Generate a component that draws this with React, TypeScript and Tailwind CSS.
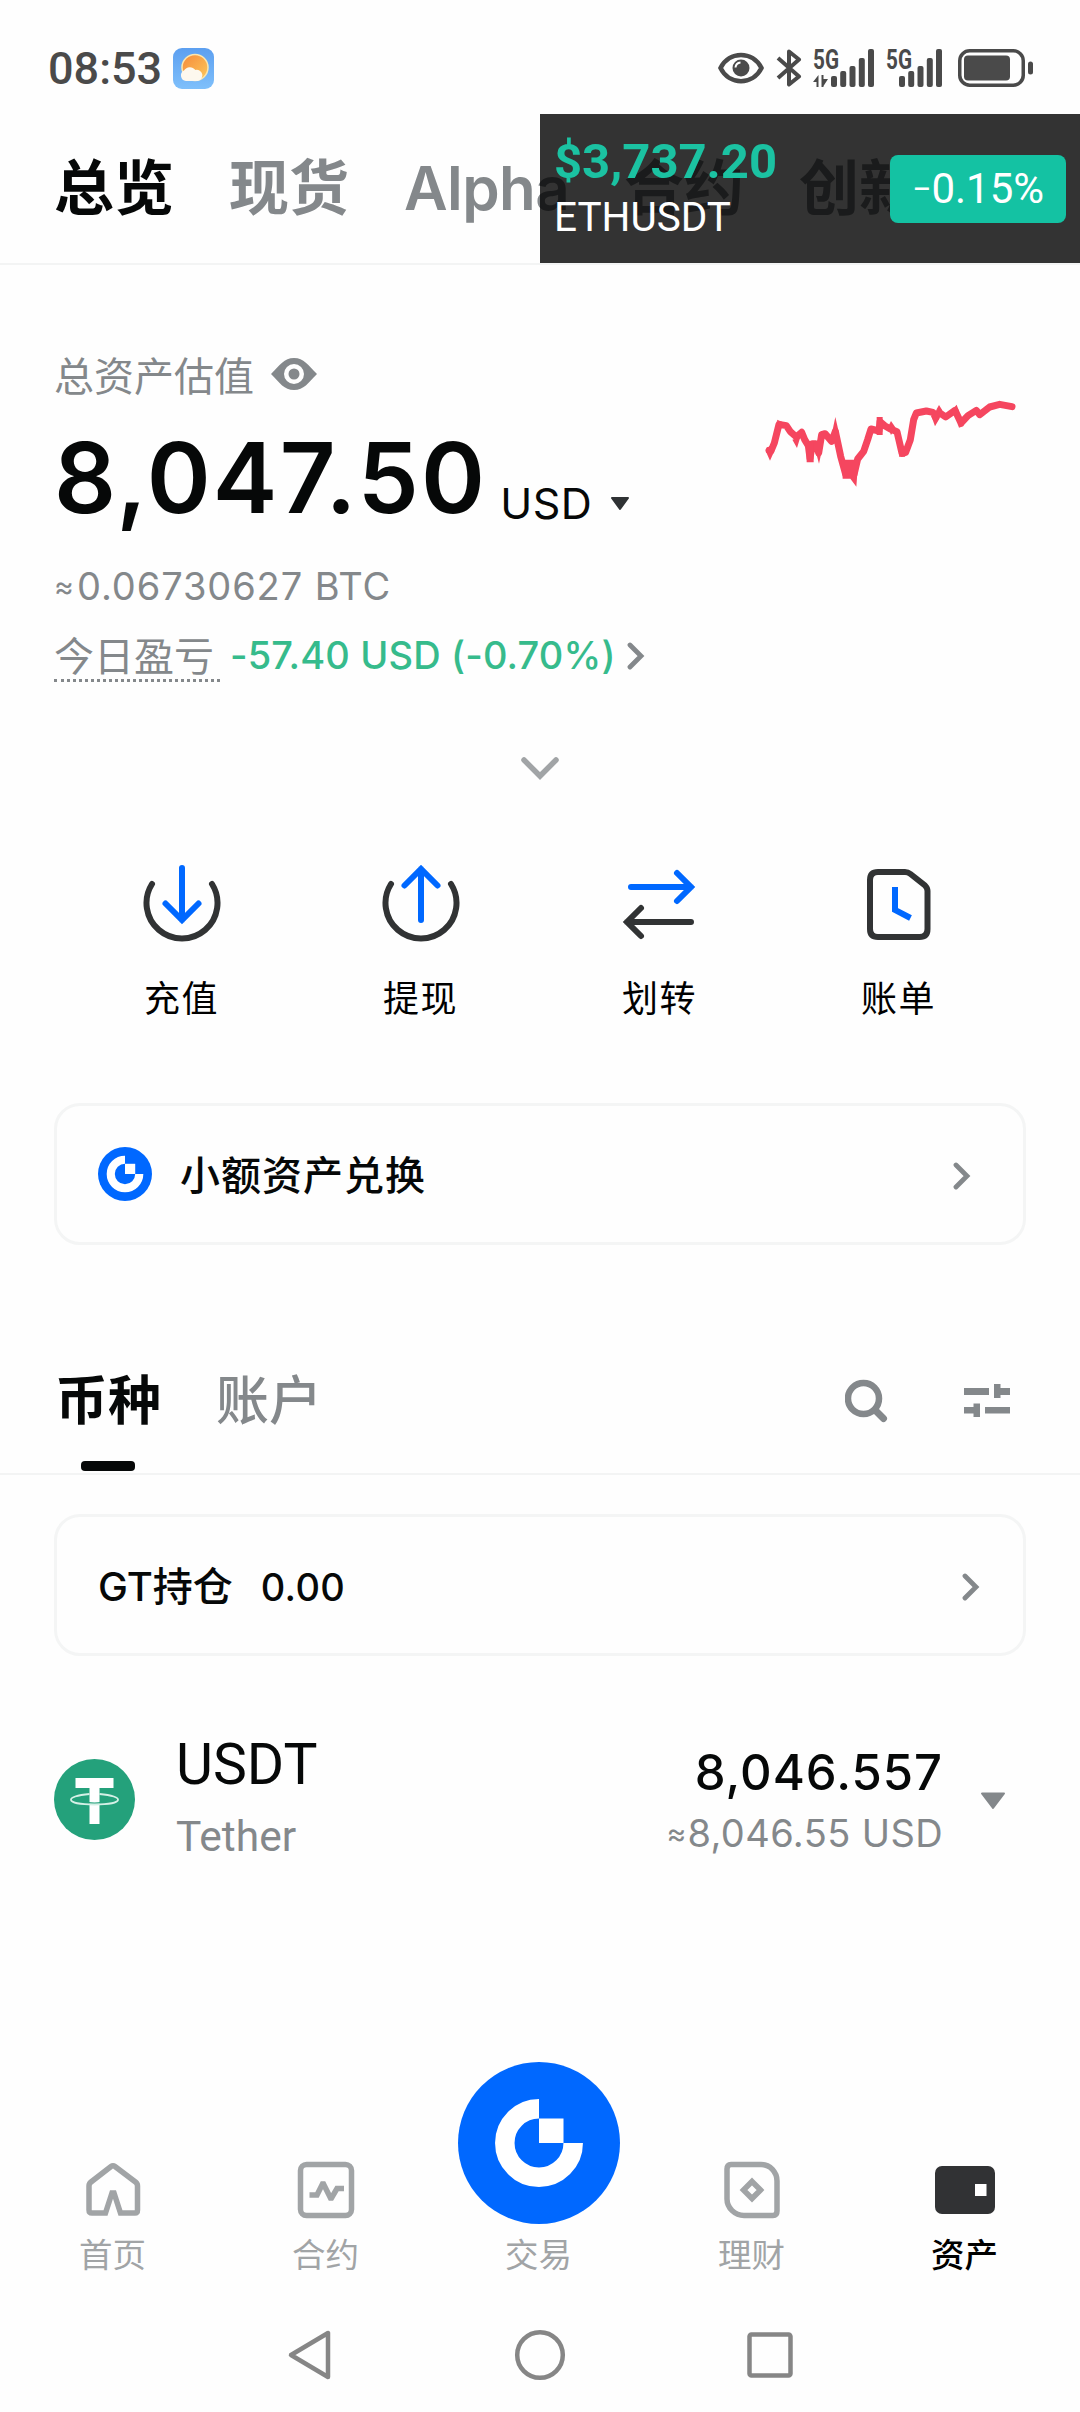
import React from 'react';

interface GateLogoProps {
  size: number;
  scale?: number;
}

const GateLogo: React.FC<GateLogoProps> = ({ size, scale = 1 }) => (
  <svg width={size} height={size} viewBox="-81 -81 162 162" className="block">
    <circle r="81" fill="#0068ff" />
    <g transform={`scale(${scale})`}>
      <path d="M0 -34.2 A34.2 34.2 0 1 0 34.2 0" fill="none" stroke="#fff" strokeWidth="19.5" />
      <rect x="0" y="-24.5" width="24.5" height="24.5" fill="#fff" />
    </g>
  </svg>
);

const ChevronRight: React.FC = () => (
  <svg width="18" height="28" viewBox="0 0 18 28" fill="none" className="block">
    <path d="M3 3 L14 14 L3 25" stroke="#84888b" strokeWidth="4.8" strokeLinecap="round" />
  </svg>
);

const SignalBars: React.FC<{ arrows?: boolean }> = ({ arrows }) => (
  <svg width="62" height="38" viewBox="0 0 62 38" fill="#4a4a4a" className="block">
    <text
      x="0"
      y="20"
      textLength="26"
      lengthAdjust="spacingAndGlyphs"
      fontFamily="Roboto, sans-serif"
      fontSize="27"
      fontWeight="700"
    >
      5G
    </text>
    {arrows && <path d="M0 33 L5.5 26 V38 H3.5 V33 Z M8.5 26 H10.5 V30 H15 L10.5 37 V38 H8.5 Z" />}
    <g transform={arrows ? 'translate(18 0)' : 'translate(13 0)'}>
      <rect x="0" y="27" width="6" height="11" rx="2" />
      <rect x="9.2" y="22" width="6" height="16" rx="2" />
      <rect x="18.5" y="17" width="6" height="21" rx="2" />
      <rect x="27.8" y="9" width="6" height="29" rx="2" />
      <rect x="37" y="0" width="6" height="38" rx="2" />
    </g>
  </svg>
);

const StatusBar: React.FC = () => (
  <div className="flex h-[114px] shrink-0 items-center justify-between pt-[22px] pr-[46px] pl-[48px]">
    <div className="flex items-center">
      <span className="w-[125px] font-['Roboto'] text-[45px] leading-none font-medium text-[#4a4a4a]">08:53</span>
      <svg width="41" height="41" viewBox="0 0 41 41" className="block">
        <defs>
          <linearGradient id="sky" x1="0" y1="0" x2="0" y2="1">
            <stop offset="0" stopColor="#5c9ff0" />
            <stop offset="1" stopColor="#7fc0fb" />
          </linearGradient>
          <linearGradient id="sun" x1="0" y1="0" x2="1" y2="1">
            <stop offset="0" stopColor="#f58a3c" />
            <stop offset="1" stopColor="#fdc95a" />
          </linearGradient>
        </defs>
        <rect width="41" height="41" rx="9" fill="url(#sky)" />
        <circle cx="22" cy="19.5" r="13" fill="url(#sun)" stroke="#fbe6ae" strokeWidth="1.5" />
        <path
          d="M13 33 a5.5 5.5 0 0 1 -2 -10.4 a7 7 0 0 1 11.5 -0.6 a5.5 5.5 0 0 1 2.5 11 Z"
          fill="#fdf8ee"
        />
      </svg>
    </div>
    <div className="flex items-center">
      <svg width="46" height="32" viewBox="0 0 46 32" fill="none" className="block">
        <path d="M2.5 16 C11 -1.5 35 -1.5 43.5 16 C35 33.5 11 33.5 2.5 16 Z" stroke="#4a4a4a" strokeWidth="4.5" />
        <circle cx="23" cy="16" r="8.5" fill="#4a4a4a" />
        <path d="M17.5 15.5 a5.5 5.5 0 0 1 5 -5" stroke="#fff" strokeWidth="2" />
      </svg>
      <svg width="26" height="38" viewBox="0 0 26 38" fill="none" className="mr-[11px] ml-[12px] block">
        <path d="M2 9 L23 27.5 L13 35.5 V2.5 L23 10.5 L2 29" stroke="#4a4a4a" strokeWidth="4" strokeLinejoin="round" />
      </svg>
      <SignalBars arrows />
      <div className="ml-[11px]">
        <SignalBars />
      </div>
      <svg width="76" height="38" viewBox="0 0 76 38" className="ml-[10px] block">
        <rect x="1.75" y="1.75" width="63.5" height="34.5" rx="10" fill="none" stroke="#4a4a4a" strokeWidth="3.5" />
        <rect x="6" y="6.5" width="46" height="25" rx="4" fill="#4a4a4a" />
        <rect x="70" y="12.5" width="5" height="13" rx="2.5" fill="#4a4a4a" />
      </svg>
    </div>
  </div>
);

const PriceTicker: React.FC = () => (
  <div className="absolute top-0 left-[540px] flex h-[149px] w-[540px] items-center justify-between bg-black/80 pr-[14px] pl-[14px]">
    <div className="flex flex-col pb-[2px] font-['Roboto'] leading-none">
      <span className="text-[49px] font-bold text-[#1bc2a2]">$3,737.20</span>
      <span className="mt-[11px] text-[40.5px] text-white">ETHUSDT</span>
    </div>
    <div className="flex h-[68px] w-[176px] items-center justify-center rounded-lg bg-[#14c2a3] font-['Roboto'] text-[42px] leading-none text-white">
      <span className="text-[34px]">−</span>0.15%
    </div>
  </div>
);

const topTabs = ['总览', '现货', 'Alpha', '合约', '创新'];

const TopTabs: React.FC = () => (
  <div className="relative flex h-[151px] shrink-0 items-center gap-[55px] overflow-hidden border-b-2 border-[#f3f4f4] pb-[2px] pl-[54px]">
    {topTabs.map((tab, i) => (
      <span
        key={tab}
        className={`shrink-0 text-[60px] leading-none font-semibold ${i === 0 ? 'text-[#060808]' : 'text-[#84888b]'} ${
          tab === 'Alpha' ? 'tracking-[-0.6px]' : ''
        }`}
      >
        {tab}
      </span>
    ))}
    <PriceTicker />
  </div>
);

const TrendLine: React.FC = () => (
  <svg width="252" height="92" viewBox="376 118 756 276" className="mt-[134px] block">
    <path
      d="M388 272 L394 274 L404 250 L418 194 L440 198 L452 216 L470 232 L486 218 L495 240 L506 258 L511 296 L518 252 L528 252 L537 280 L546 225 L556 222 L576 245 L587 215 L603 290 L618 344 L626 312 L636 312 L643 345 L654 298 L672 275 L684 240 L694 208 L718 214 L721 186 L735 198 L752 208 L772 216 L787 281 L798 278 L812 240 L822 180 L830 160 L860 154 L880 158 L888 174 L898 158 L918 172 L946 152 L964 190 L985 168 L1010 152 L1020 165 L1050 142 L1080 134 L1117 141"
      fill="none"
      stroke="#f5465f"
      strokeWidth="21"
      strokeLinejoin="round"
      strokeLinecap="round"
    />
    <path
      d="M379 276 L391 303 L404 274 Z M412 180 L430 188 L416 200 Z M458 240 L472 265 L482 232 Z M500 250 H522 V308 H501 Z M528 275 L538 312 L547 270 Z M578 215 L587 172 L598 220 Z M606 300 H656 L650 381 L632 357 H609 Z M711 172 H729 V226 H711 Z M745 205 L754 226 L764 210 Z M754 184 L746 200 L768 204 Z M780 280 L778 291 H796 L800 280 Z M876 172 L886 200 L900 176 Z M890 150 L898 136 L908 152 Z M936 152 L951 135 L958 155 Z M954 192 L958 204 L974 198 Z"
      fill="#f5465f"
    />
  </svg>
);

const AssetSummary: React.FC = () => (
  <div className="flex h-[455px] shrink-0 justify-between pr-[63px] pl-[54px]">
    <div className="flex flex-col pt-[85px]">
      <div className="flex h-[52px] items-center pt-[1px] text-[40px] leading-none text-[#84888b]">
        总资产估值
        <svg width="46" height="32" viewBox="0 0 46 32" className="mb-[6px] ml-[17px] block">
          <path
            d="M0 16 C9 7 13 0 23 0 C33 0 37 7 46 16 C37 25 33 32 23 32 C13 32 9 25 0 16 Z M23 6 A10 10 0 1 0 23 26 A10 10 0 1 0 23 6 Z"
            fill="#84888b"
            fillRule="evenodd"
          />
          <circle cx="23" cy="16" r="5.5" fill="#84888b" />
        </svg>
      </div>
      <div className="mt-[27px] flex items-end leading-none text-[#060808]">
        <span className="text-[97px] font-semibold tracking-[2.2px]">8,047.50</span>
        <span className="mb-[1px] ml-[13px] text-[43px] tracking-[0.5px]">USD</span>
        <svg width="20" height="14" viewBox="0 0 20 14" className="mb-[15px] ml-[18px] block">
          <path d="M2 1 H18 L10 12 Z" fill="#2f3234" stroke="#2f3234" strokeWidth="2" strokeLinejoin="round" />
        </svg>
      </div>
      <div className="mt-[40px] flex h-[40px] items-center text-[38px] leading-none tracking-[0.9px] text-[#84888b]">
        <span className="w-[23px] text-[30px]">≈</span>
        0.06730627 BTC
      </div>
      <div className="mt-[27px] flex h-[49px] text-[38px] leading-none">
        <span className="flex w-[166px] items-center border-b-3 border-dotted border-[#84888b] pt-[1px] text-[40px] text-[#84888b]">
          今日盈亏
        </span>
        <span className="ml-[10px] pt-[3px] font-medium tracking-[0.15px] text-[#36bb8c]">-57.40 USD (-0.70%)</span>
        <div className="mt-[9px] ml-[11px]">
          <ChevronRight />
        </div>
      </div>
    </div>
    <TrendLine />
  </div>
);

const actions = [
  {
    label: '充值',
    icon: (
      <>
        <path d="M10 20 A35.5 35.5 0 1 0 70 20" stroke="#313334" />
        <path d="M40 4 V56 M23.5 39.5 L40 56 L56.5 39.5" stroke="#0068ff" />
      </>
    ),
  },
  {
    label: '提现',
    icon: (
      <>
        <path d="M10 20 A35.5 35.5 0 1 0 70 20" stroke="#313334" />
        <path d="M40 56 V5 M23.5 21.5 L40 5 L56.5 21.5" stroke="#0068ff" />
      </>
    ),
  },
  {
    label: '划转',
    icon: (
      <>
        <path d="M11 23 H71 M57 9 L71 23 L57 37" stroke="#0068ff" />
        <path d="M71 58 H7 M21 44 L7 58 L21 72" stroke="#313334" />
      </>
    ),
  },
  {
    label: '账单',
    icon: (
      <>
        <path
          d="M19 8 H46 Q49 8 51.5 10 L66 21.5 Q68.5 24 68.5 27 V65 Q68.5 73 60.5 73 H19 Q11 73 11 65 V16 Q11 8 19 8 Z"
          stroke="#313334"
        />
        <path d="M36 23 V46 L51.5 54" stroke="#0068ff" strokeLinecap="butt" />
      </>
    ),
  },
];

const Actions: React.FC = () => (
  <div className="flex h-[383px] shrink-0 flex-col items-center">
    <svg width="38" height="24" viewBox="0 0 38 24" fill="none" className="mt-[36px] block">
      <path d="M3 4 L19 20 L35 4" stroke="#a1a4a6" strokeWidth="5.5" strokeLinecap="round" />
    </svg>
    <div className="mt-[84px] grid w-[956px] grid-cols-4">
      {actions.map(({ label, icon }) => (
        <div key={label} className="flex flex-col items-center">
          <svg width="80" height="80" viewBox="0 0 80 80" fill="none" strokeWidth="6" strokeLinecap="round" className="block">
            {icon}
          </svg>
          <span className="mt-[37px] text-[36px] leading-none tracking-[1.5px] text-black">{label}</span>
        </div>
      ))}
    </div>
  </div>
);

const ListTabs: React.FC = () => (
  <div className="flex h-[142px] shrink-0 items-start gap-[55px] border-b-2 border-[#f3f4f4] pr-[70px] pl-[55px]">
    <div className="flex flex-col items-center pt-[42px]">
      <span className="text-[53px] leading-none font-semibold text-[#060808]">币种</span>
      <div className="mt-[33px] h-[10px] w-[54px] rounded bg-[#060808]" />
    </div>
    <span className="pt-[42px] text-[53px] leading-none font-medium text-[#84888b]">账户</span>
    <div className="ml-auto flex items-center pt-[46px]">
      <svg width="43" height="44" viewBox="0 0 43 44" fill="none" stroke="#84888b" className="block">
        <circle cx="18.5" cy="19.5" r="15.5" strokeWidth="6.5" />
        <path d="M30 31 L38.5 39.5" strokeWidth="7" strokeLinecap="round" />
      </svg>
      <svg width="46" height="34" viewBox="0 0 46 34" fill="#84888b" className="ml-[76px] block">
        <path d="M0 4 H25 V11 H0 Z M30 0 H36.5 V4 H46 V11 H36.5 V14 H30 Z" />
        <path d="M0 23 H9.5 V19.5 H16 V33 H9.5 V29.5 H0 Z M21 23 H46 V29.5 H21 Z" />
      </svg>
    </div>
  </div>
);

const UsdtRow: React.FC = () => (
  <div className="mt-[80px] flex shrink-0 items-center pr-[74px] pl-[54px]">
    <svg width="81" height="81" viewBox="0 0 81 81" className="mt-[4px] block">
      <circle cx="40.5" cy="40.5" r="40.5" fill="#24a17b" />
      <path d="M21.5 19 H59.5 V29 H45.5 V65 H35.5 V29 H21.5 Z" fill="#fff" />
      <path d="M33 43.6 Q40.5 44.8 48 43.6" fill="none" stroke="#24a17b" strokeWidth="1.5" />
      <path
        d="M35.5 35 C10 37 10 45.5 40.5 45.5 C71 45.5 71 37 45.5 35"
        fill="none"
        stroke="#d5f0e6"
        strokeWidth="1.8"
      />
    </svg>
    <div className="ml-[41px] flex flex-col font-['Roboto'] leading-none">
      <span className="text-[57px] text-[#060808]">USDT</span>
      <span className="mt-[23px] text-[42.5px] text-[#84888b]">Tether</span>
    </div>
    <div className="mt-[6px] ml-auto flex flex-col items-end leading-none">
      <span className="text-[49px] font-medium tracking-[1px] text-[#060808]">8,046.557</span>
      <span className="mt-[17px] flex items-center text-[38px] tracking-[0.4px] text-[#84888b]">
        <span className="w-[21px] text-[30px]">≈</span>8,046.55 USD
      </span>
    </div>
    <svg width="26" height="18" viewBox="0 0 26 18" className="mt-[8px] ml-[37px] block">
      <path d="M2 1.5 H24 L13 16 Z" fill="#84888b" stroke="#84888b" strokeWidth="2" strokeLinejoin="round" />
    </svg>
  </div>
);

const navItems = [
  {
    label: '首页',
    icon: (
      <path d="M9 53 H22.5 L29 33 H31 L37.5 53 H52 Q54.5 53 54.5 50 V26 Q54.5 23.5 52.5 22 L32 6.5 Q30 5 28 6.5 L8 22 Q6 23.5 6 26 V50 Q6 53 9 53 Z" />
    ),
  },
  {
    label: '合约',
    icon: (
      <>
        <rect x="4.5" y="4.5" width="51" height="51" rx="6" />
        <path d="M13.5 35 H21 L26.5 24 H27.5 L34.5 38 H35.5 L41 28.5 H48" />
      </>
    ),
  },
  { label: '交易', icon: null },
  {
    label: '理财',
    icon: (
      <>
        <path d="M9 4.5 H39 C48 4.5 55 12 55 21 V51 Q55 55.5 51 55.5 H22 C13 55.5 5 48 5 39 V9 Q5 4.5 9 4.5 Z" />
        <path d="M30 21.5 L38.5 30 L30 38.5 L21.5 30 Z" />
      </>
    ),
  },
  {
    label: '资产',
    icon: (
      <>
        <rect x="0" y="6" width="60" height="48" rx="7" fill="#313234" stroke="none" />
        <rect x="40" y="24" width="11.5" height="12" fill="#fff" stroke="none" />
      </>
    ),
  },
];

const BottomNav: React.FC = () => (
  <div className="grid h-[228px] shrink-0 grid-cols-5 pr-[9px] pl-[6px]">
    {navItems.map(({ label, icon }) => (
      <div key={label} className="flex flex-col items-center justify-end">
        {icon ? (
          <svg width="60" height="60" viewBox="0 0 60 60" fill="none" stroke="#a1a4a6" strokeWidth="5.5" className="block">
            {icon}
          </svg>
        ) : (
          <GateLogo size={162} />
        )}
        <span
          className={`mb-[16px] text-[33.5px] leading-none ${icon ? 'mt-[19px]' : 'mt-[15px]'} ${
            label === '资产' ? 'font-medium text-black' : 'text-[#a1a4a6]'
          }`}
        >
          {label}
        </span>
      </div>
    ))}
  </div>
);

const SystemNav: React.FC = () => (
  <div className="flex h-[124px] shrink-0 items-center justify-center gap-[181px] pt-[10px]">
    <svg width="46" height="52" viewBox="0 0 46 52" fill="none" stroke="#868686" strokeWidth="4.5" strokeLinejoin="round">
      <path d="M41 4 V48 L4 26 Z" />
    </svg>
    <svg width="52" height="52" viewBox="0 0 52 52" fill="none" stroke="#868686" strokeWidth="4.5">
      <circle cx="26" cy="26" r="22.8" />
    </svg>
    <svg width="46" height="46" viewBox="0 0 46 46" fill="none" stroke="#868686" strokeWidth="4.5">
      <rect x="2.5" y="2.5" width="41" height="41" rx="2" />
    </svg>
  </div>
);

export default function App() {
  return (
    <div className="flex h-[2412px] w-[1080px] flex-col overflow-hidden bg-[#fefefe] font-['Inter','Noto_Sans_CJK_SC',sans-serif]">
      <StatusBar />
      <TopTabs />
      <AssetSummary />
      <Actions />
      <div className="mx-[54px] flex h-[142px] shrink-0 items-center rounded-[26px] border-[3px] border-[#f4f5f5] pt-[3px] pr-[52px] pl-[41px]">
        <div className="mb-[3px]">
          <GateLogo size={54} scale={1.25} />
        </div>
        <span className="ml-[28px] text-[40px] leading-none font-medium tracking-[1px] text-[#060808]">小额资产兑换</span>
        <div className="ml-auto">
          <ChevronRight />
        </div>
      </div>
      <div className="h-[88px] shrink-0" />
      <ListTabs />
      <div className="mx-[54px] mt-[39px] flex h-[142px] shrink-0 items-center rounded-[26px] border-[3px] border-[#f4f5f5] pt-[3px] pr-[43px] pl-[41px] leading-none font-medium text-[#060808]">
        <span className="text-[40px]">GT持仓</span>
        <span className="ml-[28px] text-[38px] tracking-[0.3px]">0.00</span>
        <div className="ml-auto">
          <ChevronRight />
        </div>
      </div>
      <UsdtRow />
      <div className="grow" />
      <BottomNav />
      <SystemNav />
    </div>
  );
}
